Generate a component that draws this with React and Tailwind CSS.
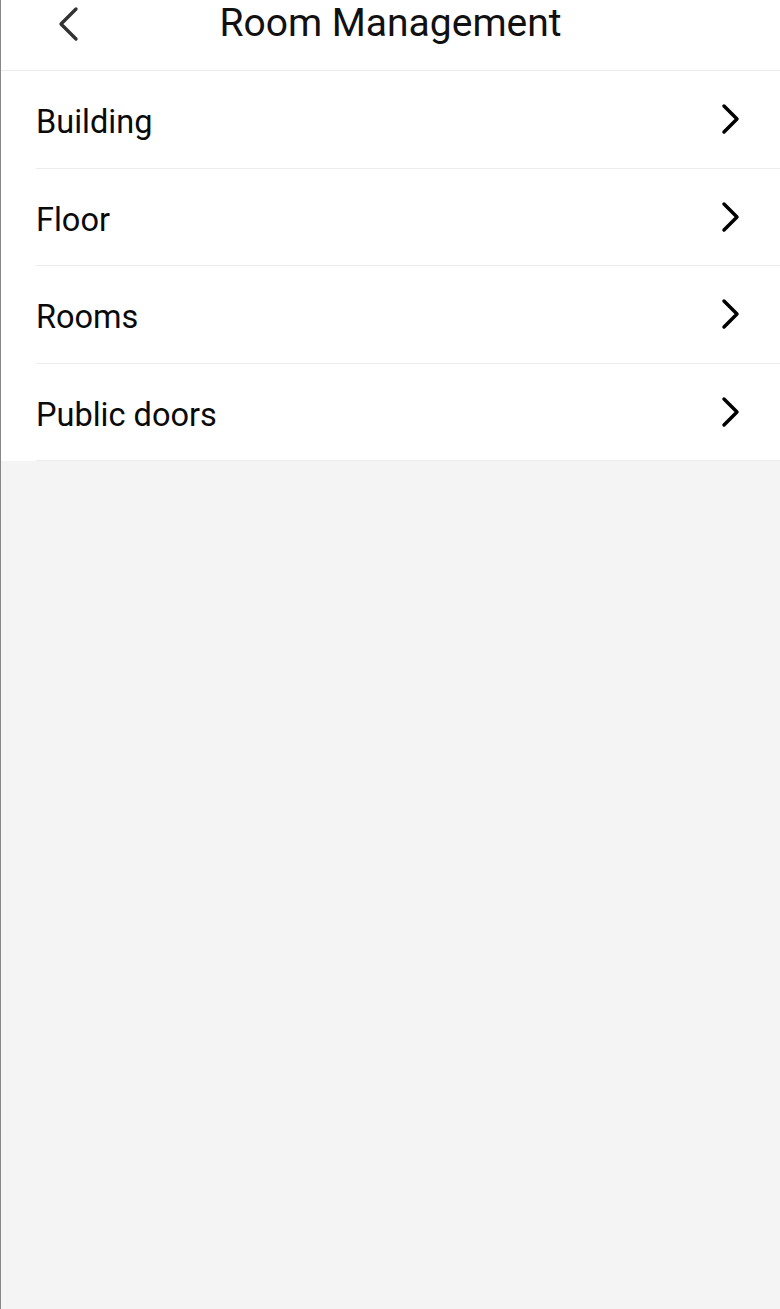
export default function App() {
  const items = ["Building", "Floor", "Rooms", "Public doors"];

  return (
    <div
      className="min-h-[1309px] bg-[#f4f4f4] border-l border-[#888888]"
      style={{ fontFamily: "Roboto, 'Noto Sans', sans-serif" }}
    >
      {/* header */}
      <div className="relative h-[71px] bg-white border-b border-[#ececec] flex items-center justify-center">
        <button className="absolute left-[53px] top-[5px] w-[28px] h-[38px] flex items-center justify-center">
          <svg width="26" height="38" viewBox="0 0 26 38" fill="none">
            <path d="M21 4 L6 19 L21 34" stroke="#333333" strokeWidth="3.4" strokeLinecap="round" strokeLinejoin="round" />
          </svg>
        </button>
        <h1 className="text-[39px] leading-none text-[#111111] -mt-[24px]">Room Management</h1>
      </div>

      {/* list */}
      <div className="bg-white pl-[35px]">
        {items.map((label) => (
          <div
            key={label}
            className="h-[97.5px] flex items-center justify-between border-b border-[#ececec] pr-[38px]"
          >
            <span className="text-[32.5px] text-[#0a0a0a] pt-[7px]">{label}</span>
            <svg width="22" height="32" viewBox="0 0 22 32" fill="none">
              <path d="M4 3 L17 16 L4 29" stroke="#000000" strokeWidth="3.5" strokeLinecap="round" strokeLinejoin="round" />
            </svg>
          </div>
        ))}
      </div>
    </div>
  );
}
